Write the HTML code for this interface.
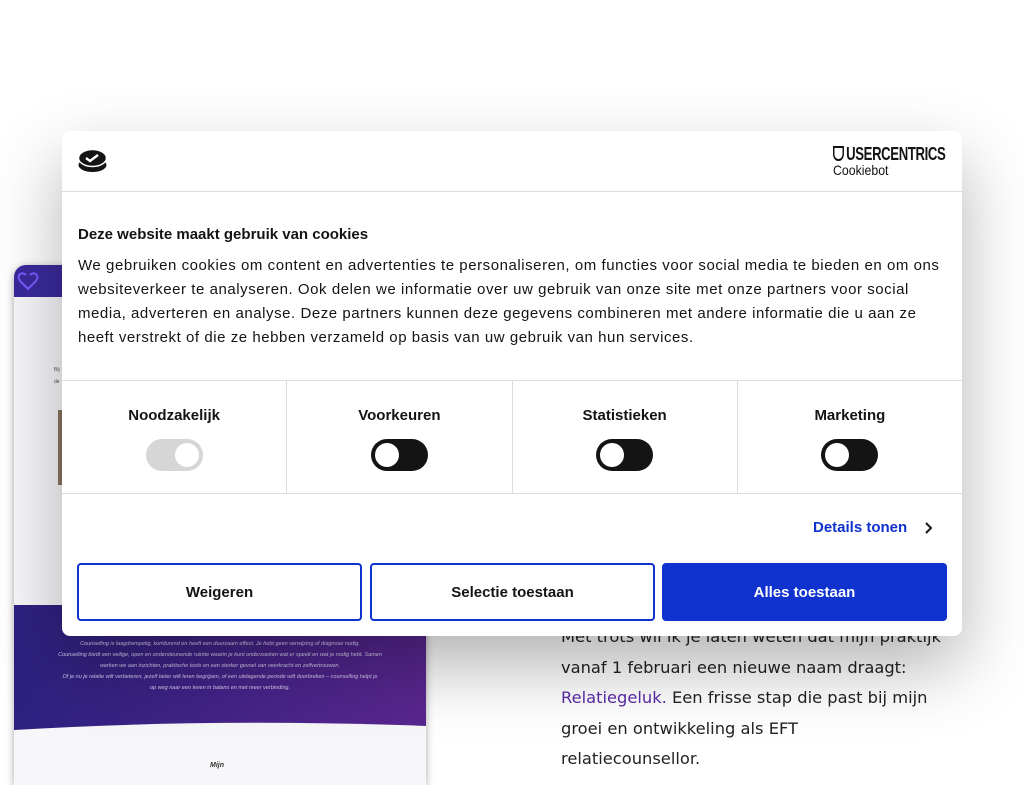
<!DOCTYPE html>
<html><head><meta charset="utf-8"><style>
body{margin:0;width:1024px;height:768px;overflow:hidden;background:#fff;font-family:"Liberation Sans",sans-serif;position:relative}
.mock{position:absolute;left:14px;top:265px;width:412px;height:520px;background:#f7f7fa;border-radius:12px 12px 0 0;box-shadow:0 2px 8px rgba(0,0,0,.35);overflow:hidden}
.mhead{height:32px;background:#3a2a9c}
.purple{position:absolute;left:0;top:340px;width:412px;height:125px;background:linear-gradient(90deg,#2c2180,#5a2690)}
.purple p{margin:0;color:#d8cff0;font-size:5.5px;font-style:italic;text-align:center;line-height:11px}
.right{position:absolute;left:561px;top:622px;line-height:30.5px;color:#222;font-family:"DejaVu Sans",sans-serif;font-size:16.3px}
.dlg{position:absolute;left:62px;top:131px;width:900px;height:505px;background:#fff;border-radius:8px;box-shadow:0 30px 70px rgba(0,0,0,.3);overflow:hidden}
.hdr{height:60px;border-bottom:1px solid #ddd;position:relative}
h2{margin:0;position:absolute;left:16px;top:95px;font-size:15px;font-weight:bold;color:#141414}
.txt{position:absolute;left:16px;top:123px;width:872px;font-size:15px;line-height:24px;color:#141414;letter-spacing:.55px}
.row{position:absolute;left:0;top:249px;width:900px;height:112px;border-top:1px solid #ddd;border-bottom:1px solid #ddd;display:flex}
.cell{flex:1;border-right:1px solid #ddd;text-align:center}
.cell:last-child{border-right:none}
.cell b{display:block;margin-top:26px;font-size:15px;color:#141414}
.tg{width:57px;height:32px;border-radius:16px;background:#141414;margin:15px auto 0;position:relative}
.tg:after{content:"";position:absolute;left:4px;top:4px;width:24px;height:24px;border-radius:50%;background:#fff}
.tg.dis{background:#d6d6d6}.tg.dis:after{left:29px}
.det{position:absolute;left:751px;top:388px;font-size:15px;font-weight:bold;color:#1032cf}
.btn{position:absolute;top:432px;width:281px;height:54px;border:2px solid #1032cf;border-radius:4px;font-weight:bold;font-size:15px;color:#141414;display:flex;align-items:center;justify-content:center;box-sizing:content-box}
</style></head><body>
<div class="mock">
<div class="mhead"><svg width="50" height="32"><path d="M12 10c-4-4-10 0-6 6l8 8 8-8c4-6-2-10-6-6" fill="none" stroke="#7a5cff" stroke-width="2"/></svg></div>
<div style="position:absolute;left:40px;top:102px;font-size:5px;color:#555">Bij<br><br>de</div>
<div style="position:absolute;left:44px;top:145px;width:6px;height:75px;background:#8a7560"></div>
<div class="purple"><div style="height:34px"></div>
<p>Counselling is laagdrempelig, kortdurend en heeft een duurzaam effect. Je hebt geen verwijzing of diagnose nodig.</p>
<p>Counselling biedt een veilige, open en ondersteunende ruimte waarin je kunt onderzoeken wat er speelt en wat je nodig hebt. Samen</p>
<p>werken we aan inzichten, praktische tools en een sterker gevoel van veerkracht en zelfvertrouwen.</p>
<p>Of je nu je relatie wilt verbeteren, jezelf beter wilt leren begrijpen, of een uitdagende periode wilt doorbreken – counselling helpt je</p>
<p>op weg naar een leven in balans en met meer verbinding.</p></div>
<svg style="position:absolute;left:0;top:455px" width="412" height="20"><path d="M0 10 Q200 -2 412 6 L412 20 L0 20Z" fill="#f7f7fa"/></svg>
<div style="position:absolute;left:196px;top:497px;font-size:7px;font-weight:bold;font-style:italic;color:#333">Mijn</div>
</div>
<div class="right">Met trots wil ik je laten weten dat mijn praktijk<br>vanaf 1 februari een nieuwe naam draagt:<br><span style="color:#5a2aa8">Relatiegeluk.</span> Een frisse stap die past bij mijn<br>groei en ontwikkeling als EFT<br>relatiecounsellor.</div>
<div class="dlg">
<div class="hdr">
<svg style="position:absolute;left:15px;top:18px" width="31" height="24" viewBox="0 0 31 24"><ellipse cx="15.5" cy="16" rx="14" ry="7" fill="#141414"/><ellipse cx="15.5" cy="9" rx="14" ry="8.5" fill="#141414" stroke="#fff" stroke-width="1.5"/><path d="M9 9l4 3 8-6" fill="none" stroke="#fff" stroke-width="2.4"/></svg>
<div style="position:absolute;left:771px;top:13px;white-space:nowrap;font-size:18px;line-height:20px;font-weight:bold;color:#141414;letter-spacing:-.5px;transform:scaleX(.73);transform-origin:left"><span style="display:inline-block;width:15px;height:15px;border:2.5px solid #141414;border-radius:0 0 7px 7px;box-sizing:border-box;vertical-align:-1px;margin-right:3px"></span>USERCENTRICS</div>
<div style="position:absolute;left:771px;top:31px;white-space:nowrap;font-size:14px;line-height:16px;color:#141414;transform:scaleX(.88);transform-origin:left">Cookiebot</div>
</div>
<h2>Deze website maakt gebruik van cookies</h2>
<div class="txt">We gebruiken cookies om content en advertenties te personaliseren, om functies voor social media te bieden en om ons websiteverkeer te analyseren. Ook delen we informatie over uw gebruik van onze site met onze partners voor social media, adverteren en analyse. Deze partners kunnen deze gegevens combineren met andere informatie die u aan ze heeft verstrekt of die ze hebben verzameld op basis van uw gebruik van hun services.</div>
<div class="row">
<div class="cell"><b>Noodzakelijk</b><div class="tg dis"></div></div>
<div class="cell"><b>Voorkeuren</b><div class="tg"></div></div>
<div class="cell"><b>Statistieken</b><div class="tg"></div></div>
<div class="cell"><b>Marketing</b><div class="tg"></div></div>
</div>
<div class="det">Details tonen</div>
<svg style="position:absolute;left:862px;top:390px" width="10" height="14"><path d="M2 2l5 5-5 5" fill="none" stroke="#141414" stroke-width="2"/></svg>
<div class="btn" style="left:15px">Weigeren</div>
<div class="btn" style="left:308px">Selectie toestaan</div>
<div class="btn" style="left:600px;background:#1032cf;color:#fff">Alles toestaan</div>
</div>
</body></html>
